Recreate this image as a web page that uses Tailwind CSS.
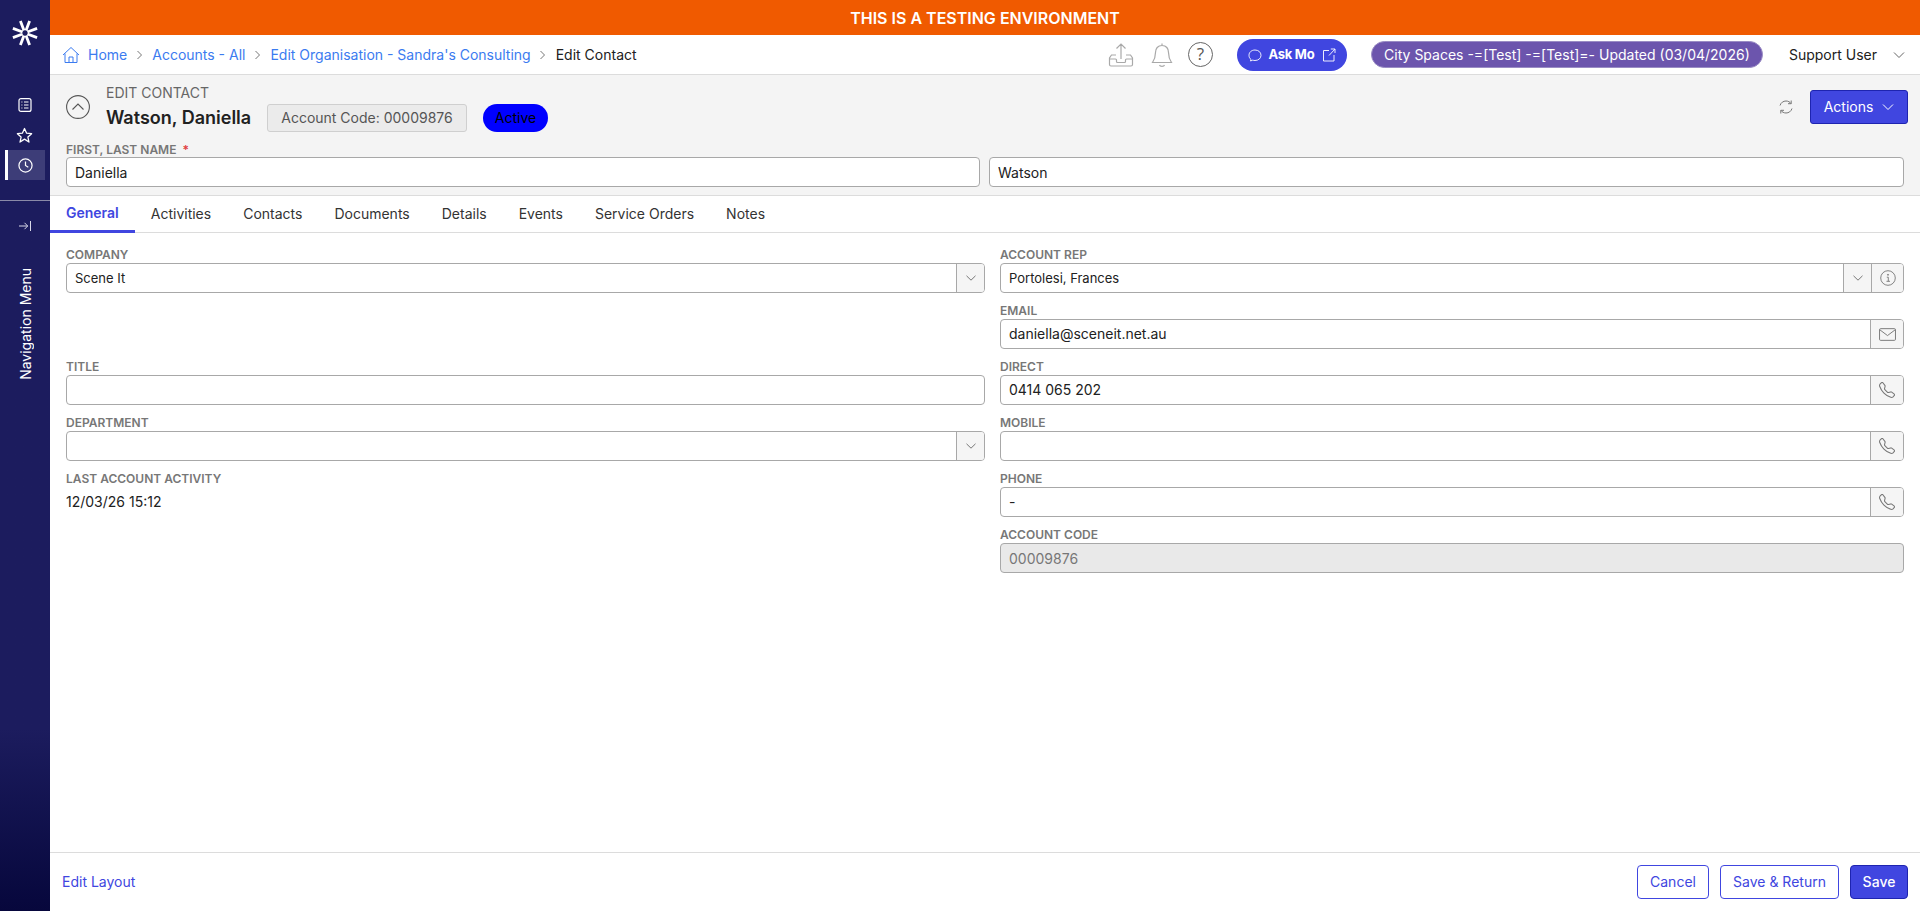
<!DOCTYPE html>
<html lang="en">
<head>
    <meta charset="UTF-8">
    <title>Edit Contact</title>
    <script src="https://cdn.jsdelivr.net/npm/@tailwindcss/browser@4"></script>
</head>
<body class="h-[911px] w-[1920px] overflow-hidden bg-white font-['Inter',sans-serif] text-sm text-[#212121]">
<div class="flex h-full">
    <!-- sidebar -->
    <aside class="flex w-[50px] shrink-0 flex-col items-center bg-gradient-to-b from-[#1c1c5e] from-80% to-[#07073c] text-white">
        <div class="flex h-[66px] w-full items-center justify-center">
            <svg width="28" height="28" viewBox="0 0 28 28" fill="none" stroke="white" stroke-width="2.8"><path d="M9.400 1.900L13 11.600M18.600 1.900L15 11.600M26.100 9.400L16.400 13M26.100 18.600L16.400 15M18.600 26.100L15 16.400M9.400 26.100L13 16.400M1.900 18.600L11.600 15M1.900 9.400L11.600 13"/></svg>
        </div>
        <div class="mt-[24px] flex h-[30px] w-full items-center justify-center">
            <svg width="16" height="16" viewBox="0 0 16 16" fill="none" stroke="white" stroke-width="1.2"><rect x="2" y="1.600" width="12" height="12.800" rx="2"/><path d="M7 5h4.500M7 8h4.500M7 11h4.500M4.400 5h1M4.400 8h1M4.400 11h1"/></svg>
        </div>
        <div class="flex h-[30px] w-full items-center justify-center pr-[2px]">
            <svg width="17" height="17" viewBox="0 0 16 16" fill="none" stroke="white" stroke-width="1.2" stroke-linejoin="round"><path d="M8 1.400l2 4.400 4.700.5-3.500 3.200 1 4.700L8 11.400l-4.200 2.800 1-4.700L1.300 6.300 6 5.800z"/></svg>
        </div>
        <div class="flex h-[30px] w-[40px] items-center justify-center border-l-[3px] border-white bg-[#3d3d78] pr-[3px]">
            <svg width="15" height="15" viewBox="0 0 16 16" fill="none" stroke="white" stroke-width="1.3"><circle cx="8" cy="8" r="7"/><path d="M8 3.600V8l3 1.800"/></svg>
        </div>
        <div class="mt-[20px] h-px w-full bg-[#8a8aa8]"></div>
        <div class="flex h-[49px] w-full items-center justify-center">
            <svg width="14" height="12" viewBox="0 0 14 12" fill="none" stroke="#d8d8e8" stroke-width="1"><path d="M1 6h8.500M6.500 2.800L9.700 6l-3.200 3.200M12.500 1v10"/></svg>
        </div>
        <div class="mt-[18px] ml-[2px] rotate-180 text-sm text-white [writing-mode:vertical-rl]">Navigation Menu</div>
    </aside>

    <div class="flex min-w-0 flex-1 flex-col">
        <!-- test banner -->
        <div class="flex h-[35px] shrink-0 items-center justify-center bg-[#f05a00] text-base font-semibold text-white">THIS IS A TESTING ENVIRONMENT</div>

        <!-- top bar -->
        <header class="flex h-[40px] shrink-0 items-center border-b border-[#dcdcdc] pl-[12px] pr-[15px]">
            <nav class="flex items-center text-[#3b7bf0]">
                <svg class="mr-[8px]" width="18" height="18" viewBox="0 0 18 18" fill="none" stroke="#3b7bf0" stroke-width="1"><path d="M1 9L9 1.500 17 9M3 7.500V16.500H15V7.500M7 16.500V11H11V16.500"/></svg>
                <span>Home</span>
                <svg class="mx-[8.500px]" width="8" height="12" viewBox="0 0 8 12" fill="none" stroke="#777" stroke-width="1"><path d="M1.500 2l4 4-4 4"/></svg>
                <span>Accounts - All</span>
                <svg class="mx-[8.500px]" width="8" height="12" viewBox="0 0 8 12" fill="none" stroke="#777" stroke-width="1"><path d="M1.500 2l4 4-4 4"/></svg>
                <span>Edit Organisation - Sandra's Consulting</span>
                <svg class="mx-[8.500px]" width="8" height="12" viewBox="0 0 8 12" fill="none" stroke="#777" stroke-width="1"><path d="M1.500 2l4 4-4 4"/></svg>
                <span class="text-[#212121]">Edit Contact</span>
            </nav>
            <div class="ml-auto flex items-center">
                <svg width="26" height="26" viewBox="0 0 26 26" fill="none" stroke="#a9a9a9" stroke-width="1.2"><path d="M13 17V2M8.500 6.500L13 2l4.500 4.500M8 13H3.500L1.500 16v6.500a1.500 1.500 0 0 0 1.500 1.500h20a1.500 1.500 0 0 0 1.500-1.500V16L22.500 13H18M1.500 17H7.500a1 1 0 0 1 1 1V19.500a1 1 0 0 0 1 1h7a1 1 0 0 0 1-1V18a1 1 0 0 1 1-1h6"/></svg>
                <svg class="ml-[17px]" width="22" height="26" viewBox="0 0 22 26" fill="none" stroke="#a9a9a9" stroke-width="1.2"><path d="M11 1.500V3.500C6.800 3.500 4.500 6.500 4.500 10.500C4.500 15 3.500 17.500 1.500 20.500H20.500C18.500 17.500 17.500 15 17.500 10.500C17.500 6.500 15.200 3.500 11 3.500M8.500 23C9 24.800 13 24.800 13.500 23"/></svg>
                <span class="ml-[15px] flex h-[25px] w-[25px] items-center justify-center rounded-full border-[1.300px] border-[#666] font-['Open_Sans',sans-serif] text-[17px] text-[#555]">?</span>
                <div class="ml-[24px] flex h-[32px] w-[110px] items-center justify-center rounded-full bg-[#4046e0] text-[13px] font-bold tracking-[-0.3px] text-white">
                    <svg class="mr-[7px]" width="14" height="14" viewBox="0 0 14 14" fill="none" stroke="white" stroke-width="0.9"><path d="M3 11.500C1.700 10.500 1 9 1 7.300 1 4.200 3.600 2 7 2s6 2.200 6 5.300-2.600 5.200-6 5.200c-.8 0-1.500-.1-2.200-.4L2.500 13z"/></svg>
                    Ask Mo
                    <svg class="ml-[8px]" width="14" height="14" viewBox="0 0 14 14" fill="none" stroke="white" stroke-width="0.9"><path d="M7 2.500H1.500v10.500H12V7M7 7.500L13 1M8.800 1H13V5"/></svg>
                </div>
                <div class="ml-[24px] flex h-[27px] w-[392px] items-center justify-center rounded-full border border-[#9a8cc4] bg-[#6c55ad] text-sm text-white">City Spaces -=[Test] -=[Test]=- Updated (03/04/2026)</div>
                <span class="ml-[26px] text-sm">Support User</span>
                <svg class="ml-[16px]" width="12" height="8" viewBox="0 0 12 8" fill="none" stroke="#666" stroke-width="1"><path d="M1 1.500l5 5 5-5"/></svg>
            </div>
        </header>

        <!-- record header -->
        <section class="h-[121px] shrink-0 border-b border-[#dcdcdc] bg-[#f4f4f4] px-[16px]">
            <div class="flex h-[70px] items-start">
                <svg class="mt-[20px]" width="24" height="24" viewBox="0 0 24 24" fill="none" stroke="#555" stroke-width="1.100"><circle cx="12" cy="12" r="11.400"/><path d="M6.500 14.500L12 9l5.500 5.500"/></svg>
                <div class="ml-[16px] mt-[10px]">
                    <div class="text-sm leading-[16px] text-[#666]">EDIT CONTACT</div>
                    <div class="mt-[3px] flex items-center">
                        <span class="w-[161px] text-lg leading-[28px] font-semibold">Watson, Daniella</span>
                        <span class="flex h-[28px] w-[200px] items-center justify-center rounded-[3px] border border-[#cfcfcf] bg-[#ebebeb] text-sm text-[#555]">Account Code: 00009876</span>
                        <span class="ml-[16px] flex h-[28px] w-[65px] items-center justify-center rounded-full bg-[#0000ff] text-sm text-black">Active</span>
                    </div>
                </div>
                <div class="mt-[15px] ml-auto mr-[-4px] flex items-center">
                    <svg width="16" height="16" viewBox="0 0 16 16" fill="none" stroke="#777" stroke-width="1"><path d="M2 6.500C3 3.500 5.300 2 8 2c2.200 0 3.900 1 5 2.500M13.200 1.500v3.200H10M14 9.500C13 12.500 10.700 14 8 14c-2.200 0-3.900-1-5-2.500M2.800 14.500v-3.200H6"/></svg>
                    <div class="ml-[16px] flex h-[34px] w-[98px] items-center justify-center rounded-[3px] border border-[#1e24b0] bg-[#4046e0] text-sm text-white">
                        Actions
                        <svg class="ml-[9px]" width="12" height="8" viewBox="0 0 12 8" fill="none" stroke="white" stroke-width="1"><path d="M1 1.500l5 5 5-5"/></svg>
                    </div>
                </div>
            </div>
            <div class="flex h-[9px] items-center text-xs font-semibold text-[#777]">FIRST, LAST NAME<span class="ml-[6px] text-[#e04040]">*</span></div>
            <div class="mt-[3px] grid grid-cols-[914px_915px] gap-[9px]">
                <input class="h-[30px] rounded-[4px] border border-[#a8a8a8] bg-white px-[8px] text-sm outline-none" value="Daniella">
                <input class="h-[30px] rounded-[4px] border border-[#a8a8a8] bg-white px-[8px] text-sm outline-none" value="Watson">
            </div>
        </section>

        <!-- tabs -->
        <nav class="flex h-[37px] shrink-0 border-b border-[#dcdcdc] text-sm text-[#333]">
            <a class="-mb-px flex items-center border-b-[3px] border-[#4046e0] px-4 font-semibold text-[#4046e0]">General</a>
            <a class="flex items-center px-4">Activities</a>
            <a class="flex items-center px-4">Contacts</a>
            <a class="flex items-center px-4">Documents</a>
            <a class="flex items-center px-4">Details</a>
            <a class="flex items-center px-4">Events</a>
            <a class="flex items-center px-4">Service Orders</a>
            <a class="flex items-center px-4">Notes</a>
        </nav>

        <!-- form -->
        <main class="min-h-0 flex-1 pl-[16px] pt-[4px]">
            <div class="grid grid-cols-[919px_904px] gap-x-[15px]">
                <div>
                    <div class="h-[56px]">
                        <label class="flex h-[26px] items-end pb-[1px] text-xs leading-[14px] font-semibold text-[#777]">COMPANY</label>
                        <div class="flex h-[30px] overflow-hidden rounded-[4px] border border-[#a8a8a8]">
                            <input class="min-w-0 flex-1 px-[8px] text-[13px] outline-none" value="Scene It">
                            <span class="flex w-[28px] items-center justify-center border-l border-[#a8a8a8] bg-[#f5f5f5]">
                                <svg width="10" height="6" viewBox="0 0 10 6" fill="none" stroke="#777" stroke-width="1"><path d="M.5 .8L5 5.200 9.500 .8"/></svg>
                            </span>
                        </div>
                    </div>
                    <div class="h-[56px]"></div>
                    <div class="h-[56px]">
                        <label class="flex h-[26px] items-end pb-[1px] text-xs leading-[14px] font-semibold text-[#777]">TITLE</label>
                        <input class="block h-[30px] w-full rounded-[4px] border border-[#a8a8a8] px-[8px] text-sm outline-none">
                    </div>
                    <div class="h-[56px]">
                        <label class="flex h-[26px] items-end pb-[1px] text-xs leading-[14px] font-semibold text-[#777]">DEPARTMENT</label>
                        <div class="flex h-[30px] overflow-hidden rounded-[4px] border border-[#a8a8a8]">
                            <input class="min-w-0 flex-1 px-[8px] text-[13px] outline-none">
                            <span class="flex w-[28px] items-center justify-center border-l border-[#a8a8a8] bg-[#f5f5f5]">
                                <svg width="10" height="6" viewBox="0 0 10 6" fill="none" stroke="#777" stroke-width="1"><path d="M.5 .8L5 5.200 9.500 .8"/></svg>
                            </span>
                        </div>
                    </div>
                    <label class="flex h-[26px] items-end pb-[1px] text-xs leading-[14px] font-semibold text-[#777]">LAST ACCOUNT ACTIVITY</label>
                    <div class="mt-[6px] text-sm leading-[18px]">12/03/26 15:12</div>
                </div>
                <div>
                    <div class="h-[56px]">
                        <label class="flex h-[26px] items-end pb-[1px] text-xs leading-[14px] font-semibold text-[#777]">ACCOUNT REP</label>
                        <div class="flex h-[30px] overflow-hidden rounded-[4px] border border-[#a8a8a8]">
                            <input class="min-w-0 flex-1 px-[8px] text-[13px] outline-none" value="Portolesi, Frances">
                            <span class="flex w-[28px] items-center justify-center border-l border-[#a8a8a8] bg-[#f5f5f5]">
                                <svg width="10" height="6" viewBox="0 0 10 6" fill="none" stroke="#777" stroke-width="1"><path d="M.5 .8L5 5.200 9.500 .8"/></svg>
                            </span>
                            <span class="flex w-[32px] items-center justify-center border-l border-[#a8a8a8] bg-[#f5f5f5]">
                                <svg width="16" height="16" viewBox="0 0 16 16" fill="none" stroke="#777" stroke-width="0.9"><circle cx="8" cy="8" r="7.300"/><path d="M6.800 7.200H8.300V11.300M6.500 11.300H10"/><circle cx="8" cy="4.800" r="0.500" fill="#777"/></svg>
                            </span>
                        </div>
                    </div>
                    <div class="h-[56px]">
                        <label class="flex h-[26px] items-end pb-[1px] text-xs leading-[14px] font-semibold text-[#777]">EMAIL</label>
                        <div class="flex h-[30px] overflow-hidden rounded-[4px] border border-[#a8a8a8]">
                            <input class="min-w-0 flex-1 px-[8px] text-sm outline-none" value="daniella@sceneit.net.au">
                            <span class="flex w-[33px] items-center justify-center border-l border-[#a8a8a8] bg-[#f5f5f5]">
                                <svg width="17" height="13" viewBox="0 0 16 12" fill="none" stroke="#777" stroke-width="0.9"><rect x="0.500" y="0.500" width="15" height="11" rx="1"/><path d="M.7 1.500L8 7l7.300-5.500"/></svg>
                            </span>
                        </div>
                    </div>
                    <div class="h-[56px]">
                        <label class="flex h-[26px] items-end pb-[1px] text-xs leading-[14px] font-semibold text-[#777]">DIRECT</label>
                        <div class="flex h-[30px] overflow-hidden rounded-[4px] border border-[#a8a8a8]">
                            <input class="min-w-0 flex-1 px-[8px] text-sm outline-none" value="0414 065 202">
                            <span class="flex w-[33px] items-center justify-center border-l border-[#a8a8a8] bg-[#f5f5f5]">
                                <svg width="16" height="16" viewBox="0 0 16 16" fill="#777"><path d="M3.654 1.328a.678.678 0 0 0-1.015-.063L1.605 2.3c-.483.484-.661 1.169-.45 1.77a17.6 17.6 0 0 0 4.168 6.608 17.6 17.6 0 0 0 6.608 4.168c.601.211 1.286.033 1.77-.45l1.034-1.034a.678.678 0 0 0-.063-1.015l-2.307-1.794a.68.68 0 0 0-.58-.122l-2.19.547a1.75 1.75 0 0 1-1.657-.459L5.482 8.062a1.75 1.75 0 0 1-.46-1.657l.548-2.19a.68.68 0 0 0-.122-.58zM1.884.511a1.745 1.745 0 0 1 2.612.163L6.29 2.98c.329.423.445.974.315 1.494l-.547 2.19a.68.68 0 0 0 .178.643l2.457 2.457a.68.68 0 0 0 .644.178l2.189-.547a1.75 1.75 0 0 1 1.494.315l2.306 1.794c.829.645.905 1.87.163 2.611l-1.034 1.034c-.74.74-1.846 1.065-2.877.702a18.6 18.6 0 0 1-7.01-4.42 18.6 18.6 0 0 1-4.42-7.009c-.362-1.03-.037-2.137.703-2.877z"/></svg>
                            </span>
                        </div>
                    </div>
                    <div class="h-[56px]">
                        <label class="flex h-[26px] items-end pb-[1px] text-xs leading-[14px] font-semibold text-[#777]">MOBILE</label>
                        <div class="flex h-[30px] overflow-hidden rounded-[4px] border border-[#a8a8a8]">
                            <input class="min-w-0 flex-1 px-[8px] text-sm outline-none">
                            <span class="flex w-[33px] items-center justify-center border-l border-[#a8a8a8] bg-[#f5f5f5]">
                                <svg width="16" height="16" viewBox="0 0 16 16" fill="#777"><path d="M3.654 1.328a.678.678 0 0 0-1.015-.063L1.605 2.3c-.483.484-.661 1.169-.45 1.77a17.6 17.6 0 0 0 4.168 6.608 17.6 17.6 0 0 0 6.608 4.168c.601.211 1.286.033 1.77-.45l1.034-1.034a.678.678 0 0 0-.063-1.015l-2.307-1.794a.68.68 0 0 0-.58-.122l-2.19.547a1.75 1.75 0 0 1-1.657-.459L5.482 8.062a1.75 1.75 0 0 1-.46-1.657l.548-2.19a.68.68 0 0 0-.122-.58zM1.884.511a1.745 1.745 0 0 1 2.612.163L6.29 2.98c.329.423.445.974.315 1.494l-.547 2.19a.68.68 0 0 0 .178.643l2.457 2.457a.68.68 0 0 0 .644.178l2.189-.547a1.75 1.75 0 0 1 1.494.315l2.306 1.794c.829.645.905 1.87.163 2.611l-1.034 1.034c-.74.74-1.846 1.065-2.877.702a18.6 18.6 0 0 1-7.01-4.42 18.6 18.6 0 0 1-4.42-7.009c-.362-1.03-.037-2.137.703-2.877z"/></svg>
                            </span>
                        </div>
                    </div>
                    <div class="h-[56px]">
                        <label class="flex h-[26px] items-end pb-[1px] text-xs leading-[14px] font-semibold text-[#777]">PHONE</label>
                        <div class="flex h-[30px] overflow-hidden rounded-[4px] border border-[#a8a8a8]">
                            <input class="min-w-0 flex-1 px-[8px] text-sm outline-none" value="-">
                            <span class="flex w-[33px] items-center justify-center border-l border-[#a8a8a8] bg-[#f5f5f5]">
                                <svg width="16" height="16" viewBox="0 0 16 16" fill="#777"><path d="M3.654 1.328a.678.678 0 0 0-1.015-.063L1.605 2.3c-.483.484-.661 1.169-.45 1.77a17.6 17.6 0 0 0 4.168 6.608 17.6 17.6 0 0 0 6.608 4.168c.601.211 1.286.033 1.77-.45l1.034-1.034a.678.678 0 0 0-.063-1.015l-2.307-1.794a.68.68 0 0 0-.58-.122l-2.19.547a1.75 1.75 0 0 1-1.657-.459L5.482 8.062a1.75 1.75 0 0 1-.46-1.657l.548-2.19a.68.68 0 0 0-.122-.58zM1.884.511a1.745 1.745 0 0 1 2.612.163L6.29 2.98c.329.423.445.974.315 1.494l-.547 2.19a.68.68 0 0 0 .178.643l2.457 2.457a.68.68 0 0 0 .644.178l2.189-.547a1.75 1.75 0 0 1 1.494.315l2.306 1.794c.829.645.905 1.87.163 2.611l-1.034 1.034c-.74.74-1.846 1.065-2.877.702a18.6 18.6 0 0 1-7.01-4.42 18.6 18.6 0 0 1-4.42-7.009c-.362-1.03-.037-2.137.703-2.877z"/></svg>
                            </span>
                        </div>
                    </div>
                    <div class="h-[56px]">
                        <label class="flex h-[26px] items-end pb-[1px] text-xs leading-[14px] font-semibold text-[#777]">ACCOUNT CODE</label>
                        <input class="block h-[30px] w-full rounded-[4px] border border-[#a8a8a8] bg-[#e9e9e9] px-[8px] text-sm text-[#777] outline-none" value="00009876" disabled>
                    </div>
                </div>
            </div>
        </main>

        <!-- footer -->
        <footer class="flex h-[59px] shrink-0 items-center border-t border-[#dcdcdc] pl-[12px] pr-[12px] text-sm">
            <a class="text-[#4046e0]">Edit Layout</a>
            <div class="ml-auto flex items-center gap-[11px]">
                <button class="h-[34px] w-[72px] rounded-[4px] border border-[#4046e0] text-[#4046e0]">Cancel</button>
                <button class="h-[34px] w-[119px] rounded-[4px] border border-[#4046e0] text-[#4046e0]">Save &amp; Return</button>
                <button class="h-[34px] w-[58px] rounded-[4px] border border-[#1e24b0] bg-[#4046e0] font-medium text-white">Save</button>
            </div>
        </footer>
    </div>
</div>
</body>
</html>
